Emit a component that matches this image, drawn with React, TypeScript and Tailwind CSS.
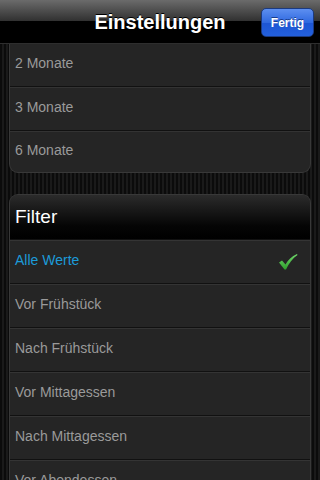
import React from 'react'

const topRows = ['2 Monate', '3 Monate', '6 Monate']
const filterRows = [
  'Alle Werte',
  'Vor Frühstück',
  'Nach Frühstück',
  'Vor Mittagessen',
  'Nach Mittagessen',
  'Vor Abendessen',
  'Nach Abendessen',
]

function Check() {
  return (
    <svg width="20" height="18" viewBox="0 0 20 18">
      <defs>
        <linearGradient id="chk" x1="0" y1="0" x2="0" y2="1">
          <stop offset="0" stopColor="#6fd66a" />
          <stop offset="1" stopColor="#2f9e2c" />
        </linearGradient>
      </defs>
      <path d="M1 9.5 L4 7.5 L7.5 11.5 C10 7 13.5 3.5 19 1 L19.5 2 C14.5 5.5 11 10 8 16.5 L6.5 16.5 Z" fill="url(#chk)" />
    </svg>
  )
}

export default function App() {
  return (
    <div
      className="w-[320px] h-[480px] overflow-hidden flex flex-col bg-[repeating-linear-gradient(90deg,#0b0b0b_0px,#0b0b0b_2px,#1a1a1a_2px,#1a1a1a_4px)]"
      style={{ fontFamily: '"Liberation Sans", Arial, sans-serif' }}
    >
      {/* nav bar */}
      <div className="relative h-[44px] shrink-0 flex items-center justify-center border-b border-[#2e2e2e] bg-[linear-gradient(#6b6b6b_0%,#2f2f2f_50%,#000_50%,#000_100%)]">
        <h1 className="text-[20px] font-bold text-white [text-shadow:0_-1px_0_#000]">Einstellungen</h1>
        <button className="absolute right-[6px] top-[8px] h-[29px] w-[53px] rounded-[5px] border border-[#1b3a80] bg-[linear-gradient(#5d8ff0_0%,#3069e0_50%,#1d55d4_51%,#2360dc_100%)] text-[12px] font-bold text-white [text-shadow:0_-1px_0_#1a3c8c]">
          Fertig
        </button>
      </div>

      <div className="flex flex-col px-[9px]">
        <div className="rounded-b-[9px] border-x border-b border-[#383838] bg-[#252525] overflow-hidden">
          {topRows.map((r, i) => (
            <div
              key={r}
              className={`flex items-center px-[5px] pb-[3px] text-[14px] text-[#9a9a9a] ${
                i === 0 ? 'h-[42px]' : i === 1 ? 'h-[44px] border-t border-t-[#111] shadow-[inset_0_1px_0_#333]' : 'h-[42px] border-t border-t-[#111] shadow-[inset_0_1px_0_#333]'
              }`}
            >
              {r}
            </div>
          ))}
        </div>

        <div className="mt-[21px] rounded-t-[9px] border-x border-t border-[#383838] bg-[#252525] overflow-hidden">
          <div className="h-[44px] flex items-center px-[5px] bg-[linear-gradient(#2b2b2b,#050505_70%,#000)] text-[19px] text-white">
            Filter
          </div>
          {filterRows.map((r, i) => (
            <div
              key={r}
              className={`h-[44px] flex items-center justify-between px-[5px] border-t border-t-[#111] shadow-[inset_0_1px_0_#343434] text-[14px] ${i === 0 ? 'text-[#1c9bd9]' : 'text-[#9a9a9a]'}`}
            >
              <span className="pb-[3px]">{r}</span>
              {i === 0 && (
                <span className="mr-[7px] mt-[1px]">
                  <Check />
                </span>
              )}
            </div>
          ))}
        </div>
      </div>
    </div>
  )
}
